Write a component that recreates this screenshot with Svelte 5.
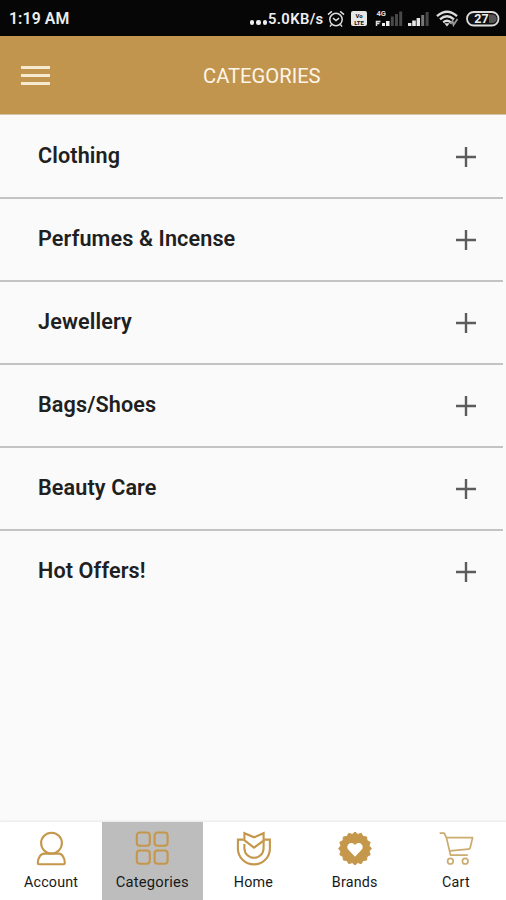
<script lang="ts">
	const categories = ['Clothing', 'Perfumes & Incense', 'Jewellery', 'Bags/Shoes', 'Beauty Care', 'Hot Offers!'];
	const tabs = ['Account', 'Categories', 'Home', 'Brands', 'Cart'];
	let active = $state('Categories');

	// scalloped edge of the brands badge
	const teeth = 16;
	const badge = Array.from({ length: teeth * 2 }, (_, i) => {
		const r = i % 2 ? 14.4 : 16.4;
		const a = (i * Math.PI) / teeth - Math.PI / 2;
		return `${(18 + r * Math.cos(a)).toFixed(2)},${(17.5 + r * Math.sin(a)).toFixed(2)}`;
	}).join(' ');
</script>

<div class="screen">
	<div class="status">
		<span class="time">1:19 AM</span>
		<div class="dots"><i></i><i></i><i></i></div>
		<span class="speed">5.0KB/s</span>
		<svg class="alarm" width="18" height="18" viewBox="0 0 18 18" fill="none" stroke="#ddd" stroke-width="1.5">
			<circle cx="9" cy="9.5" r="6.2" />
			<path d="M1 4.6 4.8 1.4M17 4.6 13.2 1.4M4.6 14.4 3 16.6M13.4 14.4 15 16.6M6 8.2l3 2.4 3-2.4" />
		</svg>
		<svg class="volte" width="16" height="15" viewBox="0 0 16 15">
			<rect width="16" height="15" rx="2" fill="#e6e6e6" />
			<text x="8" y="6.6" font-size="6" font-weight="700" text-anchor="middle" fill="#111">Vo</text>
			<text x="8" y="13.8" font-size="6" font-weight="700" text-anchor="middle" fill="#111">LTE</text>
		</svg>
		<svg class="sig4g" width="28" height="17" viewBox="0 0 28 17">
			<text x="1.5" y="6" font-size="7.5" font-weight="700" fill="#ddd">4G</text>
			<path d="M1.5 16v-4.5h4M2 13.5h2.5" stroke="#ddd" stroke-width="1.5" fill="none" />
			<path d="M7 16v-3h3v3zM11 16v-5h3.5v5z" fill="#eee" />
			<path d="M15.8 16V6.5h3V16zM20 16V4h3v12zM24.2 16V1.5h3V16z" fill="#484848" />
		</svg>
		<svg class="sig" width="21" height="15" viewBox="0 0 21 15">
			<path d="M0 15v-3h3.4v3zM4.2 15v-5.5h3.6V15zM8.6 15V7h3.4v8z" fill="#e8e8e8" />
			<path d="M13.2 15V4h3v11z" fill="#777" />
			<path d="M17.6 15V1h3v14z" fill="#484848" />
		</svg>
		<svg class="wifi" width="24" height="17" viewBox="0 0 24 17" fill="none" stroke="#ddd" stroke-width="2.3">
			<path d="M1 6.2Q11 -2.8 21 6.2M4 9.4Q11 3.2 18 9.4M7.2 12.3Q11 9.2 14.8 12.3" />
			<path d="M8.3 13.2h5.4L11 16.5z" fill="#ddd" stroke="none" />
			<path d="m14.5 14 2-3 1 4 4-6" stroke="#999" stroke-width="1.8" />
		</svg>
		<svg class="battery" width="34" height="16" viewBox="0 0 34 16">
			<rect x="1" y="1" width="31.5" height="13.5" rx="6.7" fill="#111" stroke="#ddd" stroke-width="1.8" />
			<path d="M23 3.5h3.5a4.2 4.2 0 0 1 0 8.5H23z" fill="#555" />
			<text x="15.5" y="12.3" font-size="12.5" font-weight="700" text-anchor="middle" fill="#eee">27</text>
		</svg>
	</div>

	<header>
		<button class="menu" aria-label="Menu"><i></i><i></i><i></i></button>
		<h1>CATEGORIES</h1>
	</header>

	<main>
		{#each categories as name}
			<button class="row">
				<span>{name}</span>
				<svg width="20" height="20" viewBox="0 0 20 20"><path d="M10 0v20M0 10h20" stroke="#5c5c5c" stroke-width="2.4" /></svg>
			</button>
		{/each}
	</main>

	<nav>
		{#each tabs as tab}
			<button class="tab" class:active={tab === active} onclick={() => (active = tab)}>
				<svg width="36" height="36" viewBox="0 0 36 36" fill="none" stroke="#c5974b" stroke-width="2.1">
					{#if tab === 'Account'}
						<circle cx="17.5" cy="12.1" r="10.4" />
						<path d="M10.4 22.6h14.2c3.6 0 6 4.2 6.2 9.2q.1 1.5-1.2 1.5H5q-1.3 0-1.2-1.5c.2-5 2.8-9.2 6.6-9.2z" />
					{:else if tab === 'Categories'}
						<rect x="1.8" y="1.5" width="13" height="13.3" rx="3" />
						<rect x="19.6" y="1.5" width="13" height="13.3" rx="3" />
						<rect x="1.8" y="19.5" width="13" height="13.3" rx="3" />
						<rect x="19.6" y="19.5" width="13" height="13.3" rx="3" />
					{:else if tab === 'Home'}
						<path d="M7.6 8.6H1.9v8.8a16 16 0 0 0 32 0V8.6h-5.7" />
						<path d="M8.4 9.6V2.2L18 6.3l9.6-4.1v7.4L18 16.6 7.6 8.6" />
						<path d="M8.4 13v4.2a9.6 9.6 0 0 0 19.2 0V9" />
					{:else if tab === 'Brands'}
						<polygon points={badge} fill="#c5974b" stroke-width="1" stroke-linejoin="round" />
						<path d="m18 25.8-6.6-7a4.3 4.3 0 0 1 0-5.5 4 4 0 0 1 6.6.8 4 4 0 0 1 6.6-.8 4.3 4.3 0 0 1 0 5.5z" fill="#fff" stroke="none" />
					{:else}
						<g stroke-width="1.7" stroke="#ccab6e">
							<path d="M1.6 2.2h4.6l2.2 4.4h26.2l-2.4 10.2q-.3 1.3-1.8 1.4l-18.6 1.6" stroke-linejoin="round" />
							<path d="m8.4 6.6 4.2 17.6h17.2" stroke-linejoin="round" />
							<circle cx="12.4" cy="30.2" r="2.8" />
							<circle cx="27.2" cy="30.2" r="2.8" />
						</g>
					{/if}
				</svg>
				<span>{tab}</span>
			</button>
		{/each}
	</nav>
</div>

<style>
	:global(body) { margin: 0; }
	.screen { width: 506px; height: 900px; display: flex; flex-direction: column; background: #fafafa; font-family: Roboto, sans-serif; color: #202020; overflow: hidden; }
	button { border: 0; padding: 0; margin: 0; background: none; font: inherit; color: inherit; cursor: pointer; }
	svg { display: block; flex: none; }

	.status { box-sizing: border-box; height: 36px; flex: none; display: flex; align-items: center; padding: 1px 6px 0 9px; background: #060606; color: #eee; font-weight: 700; }
	.time { flex: 1; font-size: 15.8px; font-weight: 600; letter-spacing: 0.1px; }
	.dots { display: flex; gap: 2px; padding: 8px 1px 0 0; }
	.dots i { width: 4.5px; height: 4.5px; border-radius: 50%; background: #eee; }
	.speed { width: 56px; font-size: 14.8px; font-weight: 600; letter-spacing: 0.35px; white-space: nowrap; }
	.alarm { margin-left: 3px; }
	.volte { margin-left: 6px; }
	.sig4g { margin-left: 8px; }
	.sig { margin-left: 5px; }
	.wifi { margin-left: 7px; }
	.battery { margin-left: 6px; }

	header { height: 78px; flex: none; display: flex; align-items: center; background: #c2954f; border-bottom: 1px solid #d5c4a8; }
	.menu { display: flex; flex-direction: column; gap: 5px; margin-left: 21px; }
	.menu i { width: 29px; height: 3px; background: #f6ead2; }
	h1 { margin: 1px 0 0 153px; font-size: 20.2px; font-weight: 400; color: #fdf6e8; white-space: nowrap; }

	main { flex: 1; display: flex; flex-direction: column; margin-right: 3px; padding-top: 1px; }
	.row { box-sizing: border-box; height: 83px; flex: none; display: flex; align-items: center; justify-content: space-between; padding: 0 27px 0 38px; border-bottom: 2px solid #c3c3c3; }
	.row:last-child { border-color: transparent; }
	.row span { margin-top: -2px; font-size: 21.6px; font-weight: 600; letter-spacing: 0.12px; }

	nav { height: 78px; flex: none; display: flex; padding-left: 1px; margin-right: -1px; background: #fff; box-shadow: 0 -1px 2px #e6e6e6; }
	.tab { flex: 1; display: flex; flex-direction: column; align-items: center; padding-top: 9px; color: #181818; }
	.tab.active { background: #bdbdbd; }
	.tab span { margin-top: 6px; margin-left: -1px; font-size: 14.3px; line-height: 18px; letter-spacing: 0.2px; }
	.tab.active span { font-size: 14.8px; }
</style>
